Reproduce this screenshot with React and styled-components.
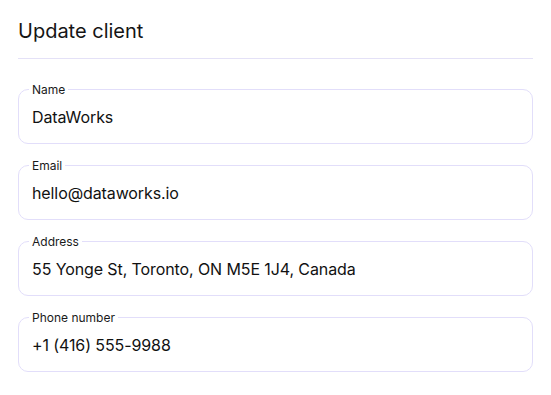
import React from 'react';
import styled, { createGlobalStyle } from 'styled-components';

const GlobalStyle = createGlobalStyle`
  body {
    margin: 0;
    background: #ffffff;
    font-family: Inter, "Noto Sans", sans-serif;
    color: #111111;
  }
`;

const Page = styled.div`
  padding: 17px 18px 0 18px;
`;

const Header = styled.div`
  padding-bottom: 13px;
  border-bottom: 1px solid #e4e1f7;
`;

const Title = styled.h1`
  margin: 0;
  font-size: 20px;
  font-weight: 400;
  line-height: 28px;
  color: #151515;
`;

const Form = styled.form`
  display: flex;
  flex-direction: column;
  gap: 14px;
  padding-top: 23px;
`;

const Field = styled.fieldset`
  margin: 0;
  padding: 0 13px 14px 13px;
  border: 1px solid #e2defa;
  border-radius: 10px;
  min-width: 0;
`;

const Legend = styled.legend`
  padding: 0 3px;
  margin-left: -3px;
  font-size: 12px;
  line-height: 15px;
  color: #1a1a1a;
`;

const Value = styled.div`
  font-size: 16px;
  line-height: 24px;
  padding-top: 8px;
  letter-spacing: -0.1px;
  color: #111111;
`;

const fields = [
  { label: 'Name', value: 'DataWorks' },
  { label: 'Email', value: 'hello@dataworks.io' },
  { label: 'Address', value: '55 Yonge St, Toronto, ON M5E 1J4, Canada' },
  { label: 'Phone number', value: '+1 (416) 555-9988' },
];

const App = () => (
  <>
    <GlobalStyle />
    <Page>
      <Header>
        <Title>Update client</Title>
      </Header>
      <Form>
        {fields.map((f) => (
          <Field key={f.label}>
            <Legend>{f.label}</Legend>
            <Value>{f.value}</Value>
          </Field>
        ))}
      </Form>
    </Page>
  </>
);

export default App;
